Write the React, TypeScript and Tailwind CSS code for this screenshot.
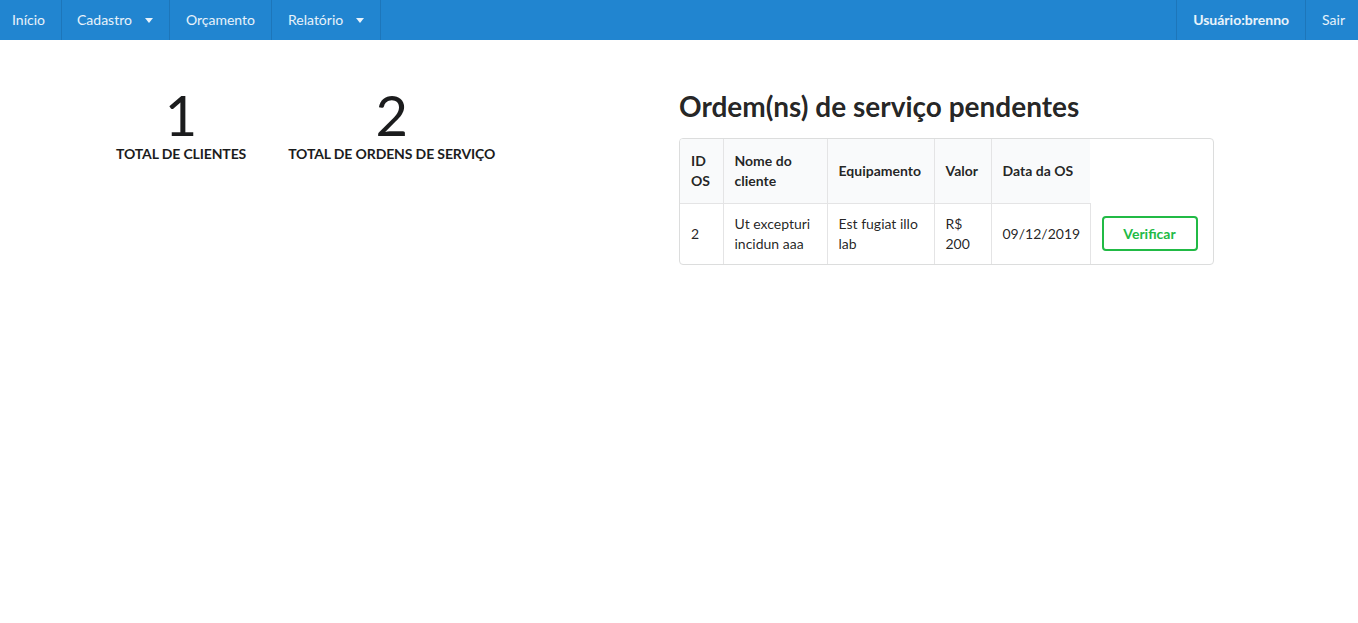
import React from 'react'

interface Ordem {
  id: number
  cliente: string
  equipamento: string
  valor: string
  data: string
}

const ordens: Ordem[] = [
  { id: 2, cliente: 'Ut excepturi incidun aaa', equipamento: 'Est fugiat illo lab', valor: 'R$ 200', data: '09/12/2019' },
]

function Caret() {
  return (
    <svg width="8" height="5" viewBox="0 0 8 5" className="ml-[13px]">
      <path d="M0 0 L8 0 L4 5 Z" fill="rgba(255,255,255,0.9)" />
    </svg>
  )
}

function Divider() {
  return <div className="w-px self-stretch bg-[#1d76ba]" />
}

function Estatistica({ valor, label }: { valor: number, label: string }) {
  return (
    <div className="flex flex-col items-center">
      <div className="text-[56px] leading-none text-[#1b1c1d]">{valor}</div>
      <div className="mt-[4px] text-sm font-bold uppercase leading-[14px] tracking-[-0.12px] text-[#1b1c1d]">{label}</div>
    </div>
  )
}

export default function App() {
  return (
    <div className="min-h-screen bg-white text-sm text-[rgba(0,0,0,0.87)]" style={{ fontFamily: 'Lato, "Open Sans", sans-serif' }}>
      <nav className="flex h-10 items-stretch bg-[#2185d0] text-sm text-white/90">
        <a className="flex items-center pl-3 pr-4">Início</a>
        <Divider />
        <a className="flex items-center pl-[15px] pr-4">Cadastro <Caret /></a>
        <Divider />
        <a className="flex items-center pl-4 pr-4">Orçamento</a>
        <Divider />
        <a className="flex items-center pl-4 pr-4">Relatório <Caret /></a>
        <Divider />
        <div className="flex-1" />
        <Divider />
        <span className="flex items-center px-4 font-bold">Usuário:brenno</span>
        <Divider />
        <a className="flex items-center pl-4 pr-[13px]">Sair</a>
      </nav>

      <div className="flex pl-[116px] pt-12">
        <div className="-mt-px flex w-[563px] items-start gap-[42px]">
          <Estatistica valor={1} label="Total de clientes" />
          <Estatistica valor={2} label="Total de ordens de serviço" />
        </div>

        <div>
          <h1 className="mb-[14px] text-[28px] font-bold leading-[36px] text-[rgba(0,0,0,0.87)]">
            Ordem(ns) de serviço pendentes
          </h1>
          <div className="w-[535px] overflow-hidden rounded border border-[#dcdddd]">
            <table className="w-full table-fixed border-collapse text-left leading-5">
              <colgroup>
                <col className="w-[43px]" />
                <col className="w-[104px]" />
                <col className="w-[107px]" />
                <col className="w-[57px]" />
                <col className="w-[99px]" />
                <col />
              </colgroup>
              <thead>
                <tr>
                  <th className="bg-[#f9fafb] px-[11px] py-3 font-bold">ID OS</th>
                  <th className="border-l border-[#e4e4e5] bg-[#f9fafb] px-[11px] py-3 font-bold">Nome do cliente</th>
                  <th className="border-l border-[#e4e4e5] bg-[#f9fafb] px-[11px] py-3 font-bold">Equipamento</th>
                  <th className="border-l border-[#e4e4e5] bg-[#f9fafb] px-[11px] py-3 font-bold">Valor</th>
                  <th className="border-l border-[#e4e4e5] bg-[#f9fafb] px-[11px] py-3 font-bold">Data da OS</th>
                  <th className="p-0" />
                </tr>
              </thead>
              <tbody>
                {ordens.map((o) => (
                  <tr key={o.id}>
                    <td className="border-t border-[#e4e4e5] px-[11px] py-[10px]">{o.id}</td>
                    <td className="border-l border-t border-[#e4e4e5] px-[11px] py-[10px]">{o.cliente}</td>
                    <td className="border-l border-t border-[#e4e4e5] px-[11px] py-[10px]">{o.equipamento}</td>
                    <td className="border-l border-t border-[#e4e4e5] px-[11px] py-[10px]">{o.valor}</td>
                    <td className="border-l border-t border-[#e4e4e5] px-[11px] py-[10px]">{o.data}</td>
                    <td className="border-l border-[#e4e4e5] px-[11px] py-[10px]">
                      <button className="h-[35px] w-[96px] rounded border-2 border-[#21ba45] font-bold text-[#21ba45]">
                        Verificar
                      </button>
                    </td>
                  </tr>
                ))}
              </tbody>
            </table>
          </div>
        </div>
      </div>
    </div>
  )
}
